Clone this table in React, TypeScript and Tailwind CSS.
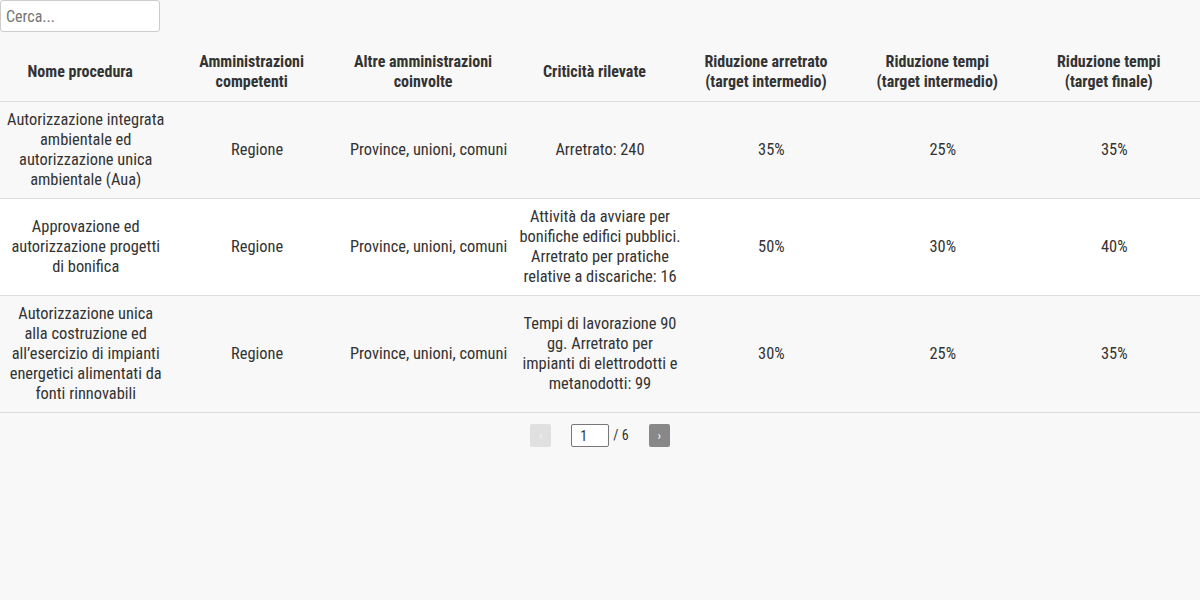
import React from "react";

type Cell = string | string[];

const rows: Cell[][] = [
  [
    ["Autorizzazione integrata", "ambientale ed", "autorizzazione unica", "ambientale (Aua)"],
    "Regione",
    "Province, unioni, comuni",
    "Arretrato: 240",
    "35%",
    "25%",
    "35%",
  ],
  [
    ["Approvazione ed", "autorizzazione progetti", "di bonifica"],
    "Regione",
    "Province, unioni, comuni",
    ["Attività da avviare per", "bonifiche edifici pubblici.", "Arretrato per pratiche", "relative a discariche: 16"],
    "50%",
    "30%",
    "40%",
  ],
  [
    [
      "Autorizzazione unica",
      "alla costruzione ed",
      "all’esercizio di impianti",
      "energetici alimentati da",
      "fonti rinnovabili",
    ],
    "Regione",
    "Province, unioni, comuni",
    ["Tempi di lavorazione 90", "gg. Arretrato per", "impianti di elettrodotti e", "metanodotti: 99"],
    "30%",
    "25%",
    "35%",
  ],
];

const headers = [
  ["Nome procedura"],
  ["Amministrazioni", "competenti"],
  ["Altre amministrazioni", "coinvolte"],
  ["Criticità rilevate"],
  ["Riduzione arretrato", "(target intermedio)"],
  ["Riduzione tempi", "(target intermedio)"],
  ["Riduzione tempi", "(target finale)"],
];

export default function App() {
  return (
    <div
      className="w-[1200px] h-[600px] bg-[#f8f8f8] text-[#333] [font-stretch:condensed]"
      style={{ fontFamily: "'Roboto Condensed', Roboto, 'DejaVu Sans Condensed', sans-serif" }}
    >
      <input
        className="block w-[160px] h-[32px] border border-[#ccc] rounded-[3px] bg-white px-[5px] text-[16px] text-[#333] placeholder:text-[#757575] outline-none"
        placeholder="Cerca..."
      />
      <table className="w-full table-fixed border-collapse mt-0">
        <thead>
          <tr className="border-b border-[#ddd]">
            {headers.map((h, i) => (
              <th key={i} className="pl-[5px] pr-[16px] pt-[20px] pb-[9px] text-center font-bold text-[16px] leading-[20px] text-[#333] align-middle">
                {h.map((l, j) => (
                  <div key={j}>{l}</div>
                ))}
              </th>
            ))}
          </tr>
        </thead>
        <tbody>
          {rows.map((r, i) => (
            <tr key={i} className={`border-b border-[#ddd] ${i % 2 === 1 ? "bg-white" : "bg-[#f8f8f8]"}`}>
              {r.map((c, j) => (
                <td key={j} className="px-[4px] py-[8px] text-center text-[16.4px] leading-[20px] align-middle text-[#333] whitespace-nowrap">
                  {Array.isArray(c) ? c.map((l, k) => <div key={k}>{l}</div>) : c}
                </td>
              ))}
            </tr>
          ))}
        </tbody>
      </table>
      <div className="flex items-center justify-center mt-[11px] text-[14px] text-[#333]">
        <button className="w-[21px] h-[23px] rounded-[2px] bg-[#e0e0e0] text-[#f4f4f4] text-[13px] leading-none flex items-center justify-center">
          ‹
        </button>
        <input
          className="ml-[20px] w-[38px] h-[23px] border border-[#777] rounded-[2px] bg-white px-[8px] text-[14px] outline-none"
          defaultValue="1"
        />
        <span className="ml-[4px]">/ 6</span>
        <button className="ml-[20px] w-[21px] h-[23px] rounded-[2px] bg-[#888] text-white text-[13px] leading-none flex items-center justify-center">
          ›
        </button>
      </div>
    </div>
  );
}
